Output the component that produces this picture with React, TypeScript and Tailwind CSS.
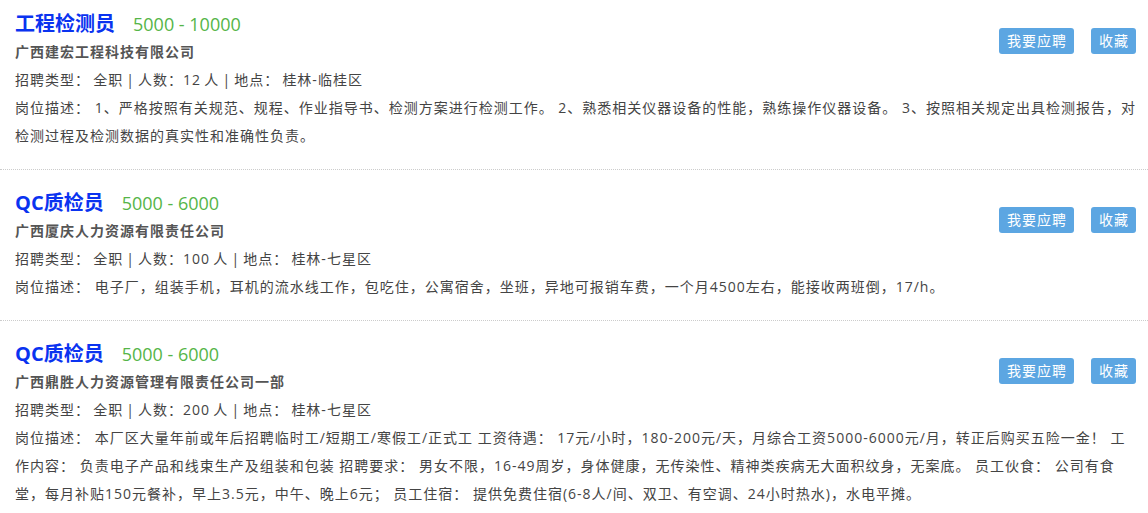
import React from 'react';

type Job = {
  title: string;
  salary: string;
  company: string;
  count: string;
  place: string;
  desc: string;
};

const jobs: Job[] = [
  {
    title: '工程检测员',
    salary: '5000 - 10000',
    company: '广西建宏工程科技有限公司',
    count: '12',
    place: '桂林-临桂区',
    desc: '1、严格按照有关规范、规程、作业指导书、检测方案进行检测工作。 2、熟悉相关仪器设备的性能，熟练操作仪器设备。 3、按照相关规定出具检测报告，对检测过程及检测数据的真实性和准确性负责。',
  },
  {
    title: 'QC质检员',
    salary: '5000 - 6000',
    company: '广西厦庆人力资源有限责任公司',
    count: '100',
    place: '桂林-七星区',
    desc: '电子厂，组装手机，耳机的流水线工作，包吃住，公寓宿舍，坐班，异地可报销车费，一个月4500左右，能接收两班倒，17/h。',
  },
  {
    title: 'QC质检员',
    salary: '5000 - 6000',
    company: '广西鼎胜人力资源管理有限责任公司一部',
    count: '200',
    place: '桂林-七星区',
    desc: '本厂区大量年前或年后招聘临时工/短期工/寒假工/正式工 工资待遇： 17元/小时，180-200元/天，月综合工资5000-6000元/月，转正后购买五险一金！ 工作内容： 负责电子产品和线束生产及组装和包装 招聘要求： 男女不限，16-49周岁，身体健康，无传染性、精神类疾病无大面积纹身，无案底。 员工伙食： 公司有食堂，每月补贴150元餐补，早上3.5元，中午、晚上6元； 员工住宿： 提供免费住宿(6-8人/间、双卫、有空调、24小时热水)，水电平摊。',
  },
];

const JobItem = ({ job }: { job: Job }) => {
  return (
    <div className="pl-[15px] pr-[12px] pt-[18px] pb-[19px] border-b border-dotted border-[#cccccc]">
      <div className="flex justify-between">
        <div>
          <div className="flex items-baseline h-[29px] leading-[29px]">
            <span className="text-[20px] font-bold text-[#0a33f0]">{job.title}</span>
            <span className="ml-[18px] text-[18px] text-[#55b548]">{job.salary}</span>
          </div>
          <div className="leading-[28px] text-[14px] tracking-[1px] font-bold text-[#555555]">{job.company}</div>
          <div className="leading-[28px] text-[14px] tracking-[1px] [word-spacing:-1.5px] text-[#444444]">
            招聘类型： 全职 | 人数：{job.count} 人 | 地点： {job.place}
          </div>
        </div>
        <div className="flex gap-[17px] pt-[19px]">
          <button className="w-[75px] h-[26px] pl-[1px] rounded-[3px] bg-[#5ca6e2] text-white text-[14px] tracking-[1px] leading-[26px]">
            我要应聘
          </button>
          <button className="w-[45px] h-[26px] pl-[1px] rounded-[3px] bg-[#5ca6e2] text-white text-[14px] tracking-[1px] leading-[26px]">
            收藏
          </button>
        </div>
      </div>
      <div className="leading-[28px] text-[14px] tracking-[1px] text-[#444444]">岗位描述： {job.desc}</div>
    </div>
  );
};

const App = () => {
  return (
    <div
      className="w-[1148px] h-[513px] overflow-hidden bg-white"
      style={{ fontFamily: '"Open Sans", "Noto Sans CJK SC", sans-serif' }}
    >
      <div className="mt-[-9px]">
        {jobs.map((job, i) => (
          <JobItem key={i} job={job} />
        ))}
      </div>
    </div>
  );
};

export default App;
